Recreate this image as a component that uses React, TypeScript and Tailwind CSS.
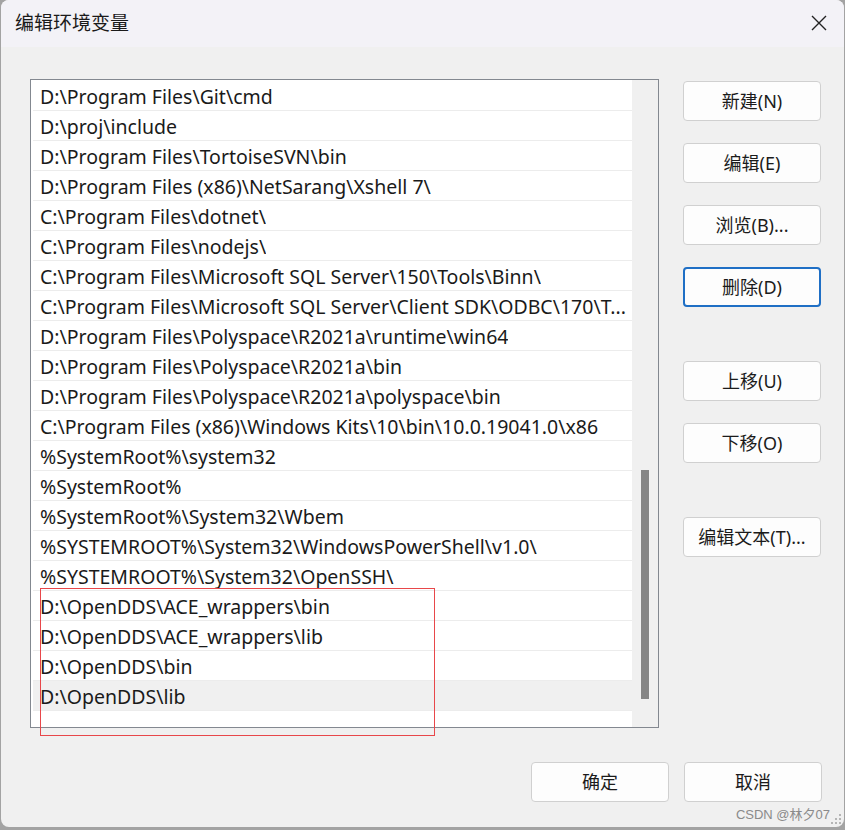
const paths = [
  "D:\\Program Files\\Git\\cmd",
  "D:\\proj\\include",
  "D:\\Program Files\\TortoiseSVN\\bin",
  "D:\\Program Files (x86)\\NetSarang\\Xshell 7\\",
  "C:\\Program Files\\dotnet\\",
  "C:\\Program Files\\nodejs\\",
  "C:\\Program Files\\Microsoft SQL Server\\150\\Tools\\Binn\\",
  "C:\\Program Files\\Microsoft SQL Server\\Client SDK\\ODBC\\170\\T...",
  "D:\\Program Files\\Polyspace\\R2021a\\runtime\\win64",
  "D:\\Program Files\\Polyspace\\R2021a\\bin",
  "D:\\Program Files\\Polyspace\\R2021a\\polyspace\\bin",
  "C:\\Program Files (x86)\\Windows Kits\\10\\bin\\10.0.19041.0\\x86",
  "%SystemRoot%\\system32",
  "%SystemRoot%",
  "%SystemRoot%\\System32\\Wbem",
  "%SYSTEMROOT%\\System32\\WindowsPowerShell\\v1.0\\",
  "%SYSTEMROOT%\\System32\\OpenSSH\\",
  "D:\\OpenDDS\\ACE_wrappers\\bin",
  "D:\\OpenDDS\\ACE_wrappers\\lib",
  "D:\\OpenDDS\\bin",
  "D:\\OpenDDS\\lib",
];

function Btn({ label, focused = false, className = "" }: { label: string; focused?: boolean; className?: string }) {
  return (
    <div
      className={
        "flex h-[40px] w-[138px] items-center justify-center rounded-[4px] bg-[#fdfdfd] text-[18px] text-[#1b1b1b] " +
        (focused ? "border-2 border-[#1f6fc5] " : "border border-[#d0d0d0] ") +
        className
      }
    >
      {label}
    </div>
  );
}

export default function App() {
  return (
    <div
      className="h-[830px] w-[845px] overflow-hidden bg-[#a3a3a3]"
      style={{ fontFamily: '"Noto Sans", "Noto Sans CJK SC", sans-serif' }}
    >
      <div className="relative ml-[1px] flex h-[827px] w-[843px] flex-col overflow-hidden rounded-[8px] bg-[#f0f0f0]">
        {/* title bar */}
        <div className="flex h-[47px] items-center justify-between bg-[#f3f2f7] pl-[14px] pr-[17px]">
          <span className="text-[19px] text-[#1a1a1a]">编辑环境变量</span>
          <svg width="16" height="16" viewBox="0 0 16 16" className="mt-[-2px]">
            <path d="M1 1 L15 15 M15 1 L1 15" stroke="#222" strokeWidth="1.4" />
          </svg>
        </div>

        <div className="flex pl-[29px] pt-[32px]">
          {/* list */}
          <div className="relative flex h-[649px] w-[629px] border border-[#838890] bg-white">
            <div className="flex min-w-0 flex-1 flex-col pl-[2px] pt-[1px]">
              {paths.map((p, i) => (
                <div
                  key={i}
                  className={
                    "flex h-[30px] items-center border-b border-[#ececec] pl-[7px] pt-[2px] text-[19.5px] leading-[26px] text-[#1a1a1a] " +
                    (i === paths.length - 1 ? "bg-[#f0f0f0]" : "")
                  }
                >
                  <span className="min-w-0 truncate whitespace-nowrap">{p}</span>
                </div>
              ))}
            </div>
            <div className="flex w-[26px] shrink-0 justify-center bg-[#f0f0f0] pt-[390px]">
              <div className="h-[229px] w-[8px] bg-[#858585]" />
            </div>
            {/* annotation */}
            <div className="absolute left-[9px] top-[508px] h-[148px] w-[395px] border border-[#e8474a]" />
          </div>

          {/* buttons */}
          <div className="ml-[24px] flex flex-col pt-[2px]">
            <Btn label="新建(N)" />
            <Btn label="编辑(E)" className="mt-[22px]" />
            <Btn label="浏览(B)..." className="mt-[22px]" />
            <Btn label="删除(D)" focused className="mt-[22px]" />
            <Btn label="上移(U)" className="mt-[54px]" />
            <Btn label="下移(O)" className="mt-[22px]" />
            <Btn label="编辑文本(T)..." className="mt-[54px]" />
          </div>
        </div>

        <div className="mt-[34px] flex justify-end gap-[15px] pr-[22px]">
          <Btn label="确定" className="w-[137px]" />
          <Btn label="取消" />
        </div>

        <div className="absolute bottom-[3px] right-[14px] text-[13px] text-[#8a8a8a]" style={{ fontFamily: '"Liberation Sans", "Noto Sans CJK SC", sans-serif' }}>
          CSDN @林夕07
        </div>
        <svg width="12" height="12" viewBox="0 0 12 12" className="absolute bottom-[2px] right-[2px]">
          <rect x="9" y="1" width="2" height="2" fill="#b5b5b5" />
          <rect x="5" y="5" width="2" height="2" fill="#b5b5b5" />
          <rect x="9" y="5" width="2" height="2" fill="#b5b5b5" />
          <rect x="1" y="9" width="2" height="2" fill="#b5b5b5" />
          <rect x="5" y="9" width="2" height="2" fill="#b5b5b5" />
          <rect x="9" y="9" width="2" height="2" fill="#b5b5b5" />
        </svg>
      </div>
    </div>
  );
}
